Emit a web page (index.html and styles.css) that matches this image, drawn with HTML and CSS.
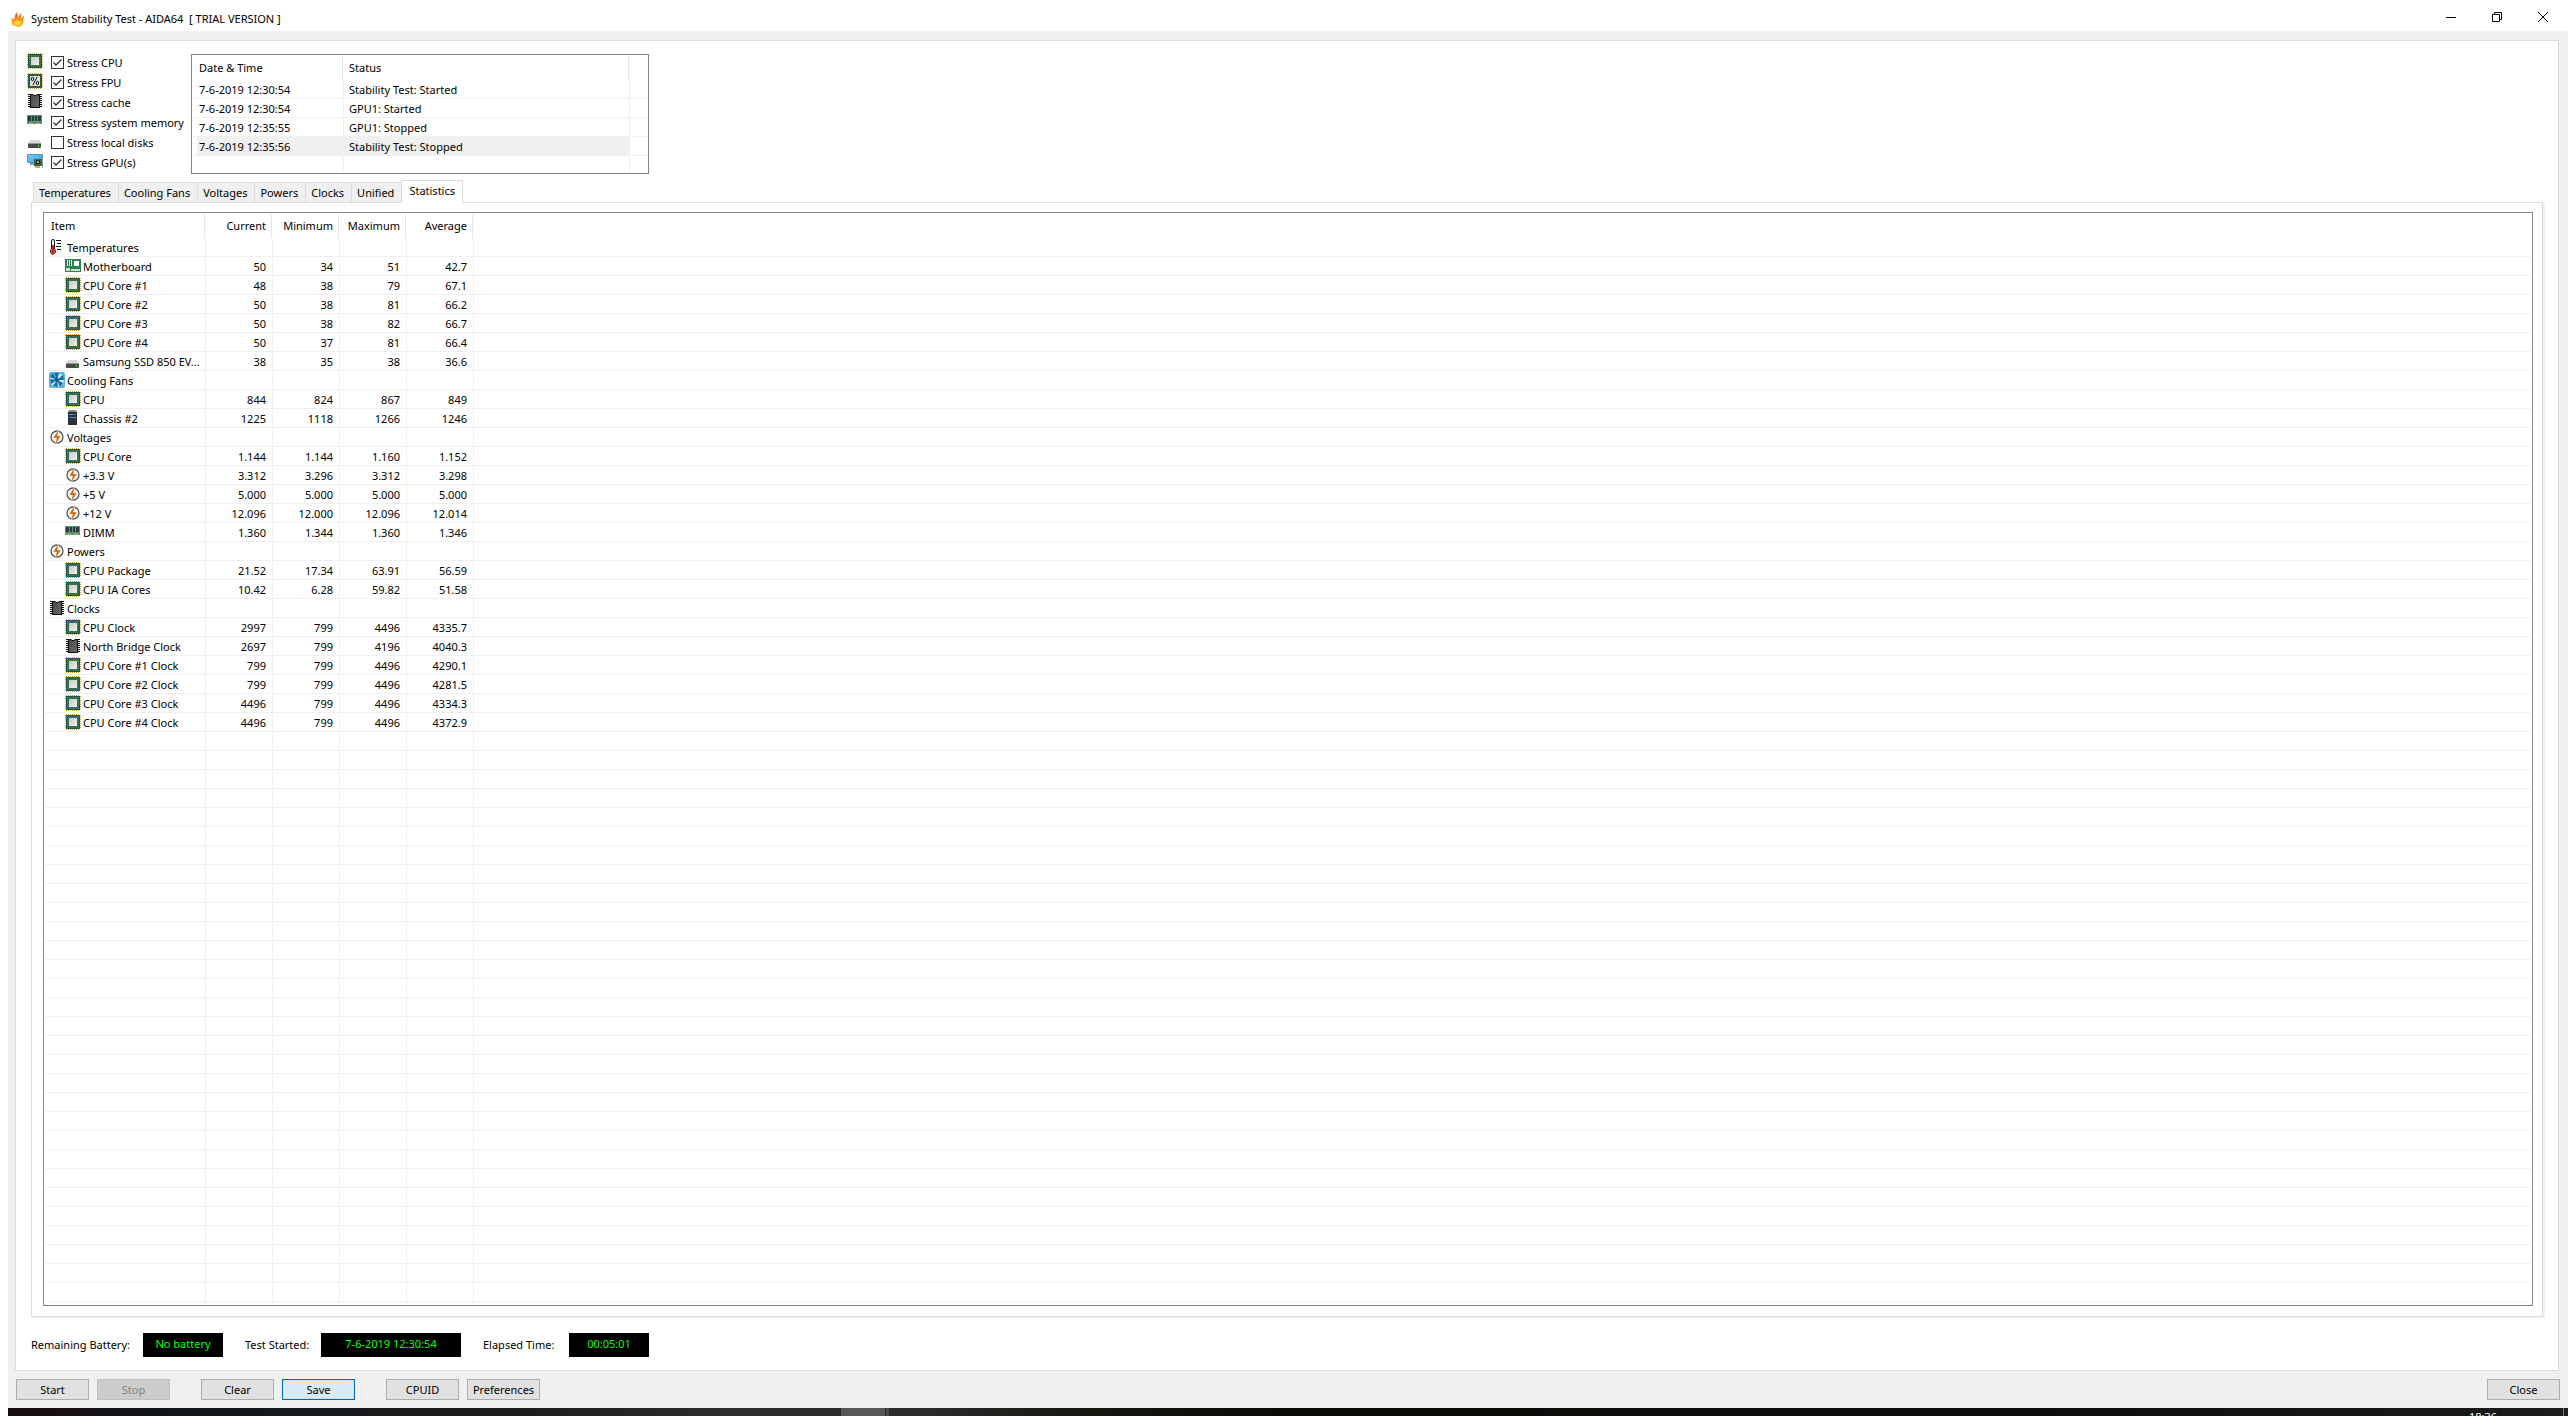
FILE: index.html
```html
<!DOCTYPE html>
<html lang="en">
<head>
<meta charset="utf-8">
<meta name="viewport" content="width=device-width, initial-scale=1">
<title>System Stability Test - AIDA64</title>
<link rel="stylesheet" href="styles.css">
</head>
<body>
<svg class="sprite" aria-hidden="true">
  <defs>
    <linearGradient id="die" x1="0" y1="0" x2="1" y2="1"><stop offset="0" stop-color="#c6c6c6"/><stop offset="1" stop-color="#f2f2f2"/></linearGradient>
    <linearGradient id="dark" x1="0" y1="0" x2="1" y2="1"><stop offset="0" stop-color="#4a4a4a"/><stop offset="1" stop-color="#6a6a6a"/></linearGradient>
    <linearGradient id="fire" x1="0" y1="0" x2="0" y2="1"><stop offset="0" stop-color="#f0641e"/><stop offset="1" stop-color="#fdb913"/></linearGradient>
    <linearGradient id="screen" x1="0" y1="0" x2="1" y2="1"><stop offset="0" stop-color="#7cc8f4"/><stop offset="1" stop-color="#3b9be0"/></linearGradient>
  </defs>
  <symbol id="cpu" viewBox="0 0 16 16">
    <path d="M1 .5h14M1 15.5h14M.5 1v14M15.5 1v14" stroke="#c9a24a" stroke-dasharray="1 1"/>
    <path fill="#35704f" d="M1 1h14v14H1z"/><path fill="none" stroke="#28573f" d="M1.500 1.500h13v13h-13z"/>
    <path fill="url(#die)" d="M4 4h8v8H4z"/>
  </symbol>
  <symbol id="fpu" viewBox="0 0 16 16">
    <path d="M1 .5h14M1 15.5h14M.5 1v14M15.5 1v14" stroke="#c9a24a" stroke-dasharray="1 1"/>
    <path fill="#2c5a45" d="M1 1h14v14H1z"/><path fill="#dedede" d="M3 3h10v10H3z"/>
    <ellipse cx="5.500" cy="6" rx="1.200" ry="1.700" fill="none" stroke="#111"/><ellipse cx="10.500" cy="10" rx="1.200" ry="1.700" fill="none" stroke="#111"/><path d="M10 4l-4 8" stroke="#111"/>
  </symbol>
  <symbol id="chip" viewBox="0 0 16 16">
    <path fill="#111" d="M3 1h3l1 1h2l1-1h3v14H3z"/><path fill="url(#dark)" d="M4 2h2l1 1h2l1-1h2v12H4z"/>
    <path d="M2 1v14M14 1v14" stroke="#111" stroke-width="2" stroke-dasharray="1 1"/>
    <path d="M2.500 2v13M13.500 2v13" stroke="#e8e8e8" stroke-dasharray="1 1"/>
  </symbol>
  <symbol id="ram" viewBox="0 0 16 16">
    <path fill="#4a9a74" d="M0 2h15v9H0z"/><path fill="#33383a" d="M1 3h3v5H1zM5 3h2v5H5zM8 3h2v5H8zM11 3h3v5h-3z"/>
    <path fill="#e0a070" d="M2 10h4v1H2zM9 10h4v1H9z"/>
  </symbol>
  <symbol id="disk" viewBox="0 0 16 16">
    <path fill="#d9d9d9" d="M3 7h9l2 3H1z"/><rect x="1" y="10" width="13" height="5" rx="1" fill="#484848"/><path fill="#999" d="M1 10h13v1H1z"/>
    <path fill="#4bea4b" d="M11 12h1v2h-1z"/>
  </symbol>
  <symbol id="gpu" viewBox="0 0 16 16">
    <path fill="url(#screen)" stroke="#4a9bd0" d="M.5 1.500h15v8H.5z"/><path fill="#8b98a2" d="M3 10h4v2H3z"/>
    <path fill="#2c6a4c" d="M7 6h8v7H7z"/><path fill="#222" d="M9 7h4v4H9z"/><path fill="#79b893" d="M10 8h2v2h-2z"/><path fill="#e8a53a" d="M8 13h5v2H8z"/><path fill="#999" d="M15 5h1v10h-1z"/>
  </symbol>
  <symbol id="thermo" viewBox="0 0 16 16">
    <path fill="#fff" stroke="#111" d="M2.500 10V2q0-1.500 1.500-1.500T5.500 2v8q1 1 1 2.500t-2.500 3q-2.500-.5-2.500-3T2.500 10z"/>
    <path fill="#e01818" d="M3 6h2v4l1 2.500q-.5 2-2 2.500-2-.5-2-2.500L3 10z"/><path stroke="#111" d="M7 1.500h5M8 4.500h4M7 7.500h5M8 10.500h4"/>
  </symbol>
  <symbol id="board" viewBox="0 0 16 16">
    <path fill="#28844a" d="M0 1h16v13H0z"/><path fill="#fff" d="M2 2h1v6H2zM4 2h1v6H4zM6 2h1v6H6zM9 3h5v5H9z"/><path fill="#d5dcd8" d="M1 10h4v3H1zM6 11h9v2H6z"/>
  </symbol>
  <symbol id="fan" viewBox="0 0 16 16">
    <rect width="16" height="16" rx="2" fill="#5cb2da"/><circle cx="8" cy="8" r="7" fill="#d0ebf6"/>
    <path fill="#0d6ea8" d="M8 8L5 1h5zM8 8l6-5 1 5zM8 8l6 3-3 4zM8 8l1 7-5-1zM8 8l-6 4-1-5zM8 8L1 5l3-4z"/><circle cx="8" cy="8" r="2" fill="#0a5f96"/>
  </symbol>
  <symbol id="tower" viewBox="0 0 16 16">
    <path fill="#888" d="M4 0h7l1 2H3z"/><path fill="#2f2f35" d="M3 2h9v13H3z"/><path stroke="#2f8de0" d="M4 4.500h7M4 7.500h7"/><path fill="#9fd4ff" d="M5 4h1v1H5zM9 7h1v1H9z"/>
  </symbol>
  <symbol id="bolt" viewBox="0 0 16 16">
    <circle cx="8" cy="8" r="6" fill="#fff" stroke="#555" stroke-width="1.300"/><path fill="#d9660f" stroke="#fff" stroke-width=".4" d="M10 0L4 9h3.500L6 16l6-9H8.500z"/>
  </symbol>
  <symbol id="flame" viewBox="0 0 16 16">
    <path fill="url(#fire)" d="M4 15C1 14 0 11 1 9L0 6l3 2c1-2 1-5 3-8 1 2 1 4 2 6 0-1 1-3 3-5 0 3 0 4-1 6l4-3-1 4c1 3-1 7-4 8z"/>
    <path fill="#ffd83a" d="M5 14c-2-1-2-3-1-5l2 1 1-3 1 3 3-1c0 3-1 4-3 5z"/>
  </symbol>
</svg>

<div class="window">
  <header class="titlebar">
    <svg class="app-icon"><use href="#flame"/></svg>
    <h1>System Stability Test - AIDA64&nbsp; [ TRIAL VERSION ]</h1>
    <button class="caption" aria-label="Minimize"><svg viewBox="0 0 10 10"><path d="M0 5.500h10"/></svg></button>
    <button class="caption" aria-label="Restore"><svg viewBox="0 0 10 10"><path d="M.5 2.500h7v7h-7zM2.500 2.500v-2h7v7h-2"/></svg></button>
    <button class="caption" aria-label="Close window"><svg viewBox="0 0 10 10"><path d="M0 0l10 10M10 0L0 10"/></svg></button>
  </header>

  <main class="client">
    <section class="panel">
      <div class="top">
        <div class="checks">
          <label><svg class="icon"><use href="#cpu"/></svg><input type="checkbox" checked>Stress CPU</label>
          <label><svg class="icon"><use href="#fpu"/></svg><input type="checkbox" checked>Stress FPU</label>
          <label><svg class="icon"><use href="#chip"/></svg><input type="checkbox" checked>Stress cache</label>
          <label><svg class="icon"><use href="#ram"/></svg><input type="checkbox" checked>Stress system memory</label>
          <label><svg class="icon"><use href="#disk"/></svg><input type="checkbox">Stress local disks</label>
          <label><svg class="icon"><use href="#gpu"/></svg><input type="checkbox" checked>Stress GPU(s)</label>
        </div>
        <div class="list log">
          <table>
            <colgroup><col class="c-date"><col class="c-status"><col></colgroup>
            <thead><tr><th>Date &amp; Time</th><th>Status</th><td></td></tr></thead>
            <tbody>
              <tr><td>7-6-2019 12:30:54</td><td>Stability Test: Started</td><td></td></tr>
              <tr><td>7-6-2019 12:30:54</td><td>GPU1: Started</td><td></td></tr>
              <tr><td>7-6-2019 12:35:55</td><td>GPU1: Stopped</td><td></td></tr>
              <tr class="selected"><td>7-6-2019 12:35:56</td><td>Stability Test: Stopped</td><td></td></tr>
            </tbody>
          </table>
          <div class="blank"></div>
        </div>
      </div>

      <div class="tabs" role="tablist">
        <button role="tab">Temperatures</button>
        <button role="tab">Cooling Fans</button>
        <button role="tab">Voltages</button>
        <button role="tab">Powers</button>
        <button role="tab">Clocks</button>
        <button role="tab">Unified</button>
        <button role="tab" aria-selected="true">Statistics</button>
      </div>

      <div class="page" role="tabpanel">
        <div class="list stats">
          <table>
            <colgroup><col class="c-item"><col class="c-num"><col class="c-num"><col class="c-num"><col class="c-num"><col></colgroup>
            <thead><tr><th>Item</th><th>Current</th><th>Minimum</th><th>Maximum</th><th>Average</th><td></td></tr></thead>
            <tbody>
              <tr class="group"><td><svg class="icon"><use href="#thermo"/></svg>Temperatures</td><td></td><td></td><td></td><td></td><td></td></tr>
              <tr><td><svg class="icon"><use href="#board"/></svg>Motherboard</td><td>50</td><td>34</td><td>51</td><td>42.7</td><td></td></tr>
              <tr><td><svg class="icon"><use href="#cpu"/></svg>CPU Core #1</td><td>48</td><td>38</td><td>79</td><td>67.1</td><td></td></tr>
              <tr><td><svg class="icon"><use href="#cpu"/></svg>CPU Core #2</td><td>50</td><td>38</td><td>81</td><td>66.2</td><td></td></tr>
              <tr><td><svg class="icon"><use href="#cpu"/></svg>CPU Core #3</td><td>50</td><td>38</td><td>82</td><td>66.7</td><td></td></tr>
              <tr><td><svg class="icon"><use href="#cpu"/></svg>CPU Core #4</td><td>50</td><td>37</td><td>81</td><td>66.4</td><td></td></tr>
              <tr><td><svg class="icon"><use href="#disk"/></svg>Samsung SSD 850 EV...</td><td>38</td><td>35</td><td>38</td><td>36.6</td><td></td></tr>
              <tr class="group"><td><svg class="icon"><use href="#fan"/></svg>Cooling Fans</td><td></td><td></td><td></td><td></td><td></td></tr>
              <tr><td><svg class="icon"><use href="#cpu"/></svg>CPU</td><td>844</td><td>824</td><td>867</td><td>849</td><td></td></tr>
              <tr><td><svg class="icon"><use href="#tower"/></svg>Chassis #2</td><td>1225</td><td>1118</td><td>1266</td><td>1246</td><td></td></tr>
              <tr class="group"><td><svg class="icon"><use href="#bolt"/></svg>Voltages</td><td></td><td></td><td></td><td></td><td></td></tr>
              <tr><td><svg class="icon"><use href="#cpu"/></svg>CPU Core</td><td>1.144</td><td>1.144</td><td>1.160</td><td>1.152</td><td></td></tr>
              <tr><td><svg class="icon"><use href="#bolt"/></svg>+3.3 V</td><td>3.312</td><td>3.296</td><td>3.312</td><td>3.298</td><td></td></tr>
              <tr><td><svg class="icon"><use href="#bolt"/></svg>+5 V</td><td>5.000</td><td>5.000</td><td>5.000</td><td>5.000</td><td></td></tr>
              <tr><td><svg class="icon"><use href="#bolt"/></svg>+12 V</td><td>12.096</td><td>12.000</td><td>12.096</td><td>12.014</td><td></td></tr>
              <tr><td><svg class="icon"><use href="#ram"/></svg>DIMM</td><td>1.360</td><td>1.344</td><td>1.360</td><td>1.346</td><td></td></tr>
              <tr class="group"><td><svg class="icon"><use href="#bolt"/></svg>Powers</td><td></td><td></td><td></td><td></td><td></td></tr>
              <tr><td><svg class="icon"><use href="#cpu"/></svg>CPU Package</td><td>21.52</td><td>17.34</td><td>63.91</td><td>56.59</td><td></td></tr>
              <tr><td><svg class="icon"><use href="#cpu"/></svg>CPU IA Cores</td><td>10.42</td><td>6.28</td><td>59.82</td><td>51.58</td><td></td></tr>
              <tr class="group"><td><svg class="icon"><use href="#chip"/></svg>Clocks</td><td></td><td></td><td></td><td></td><td></td></tr>
              <tr><td><svg class="icon"><use href="#cpu"/></svg>CPU Clock</td><td>2997</td><td>799</td><td>4496</td><td>4335.7</td><td></td></tr>
              <tr><td><svg class="icon"><use href="#chip"/></svg>North Bridge Clock</td><td>2697</td><td>799</td><td>4196</td><td>4040.3</td><td></td></tr>
              <tr><td><svg class="icon"><use href="#cpu"/></svg>CPU Core #1 Clock</td><td>799</td><td>799</td><td>4496</td><td>4290.1</td><td></td></tr>
              <tr><td><svg class="icon"><use href="#cpu"/></svg>CPU Core #2 Clock</td><td>799</td><td>799</td><td>4496</td><td>4281.5</td><td></td></tr>
              <tr><td><svg class="icon"><use href="#cpu"/></svg>CPU Core #3 Clock</td><td>4496</td><td>799</td><td>4496</td><td>4334.3</td><td></td></tr>
              <tr><td><svg class="icon"><use href="#cpu"/></svg>CPU Core #4 Clock</td><td>4496</td><td>799</td><td>4496</td><td>4372.9</td><td></td></tr>
            </tbody>
          </table>
          <div class="blank"></div>
        </div>
      </div>

      <div class="status">
        <label for="battery">Remaining Battery:</label><output id="battery">No battery</output>
        <label for="started">Test Started:</label><output id="started">7-6-2019 12:30:54</output>
        <label for="elapsed">Elapsed Time:</label><output id="elapsed">00:05:01</output>
      </div>
    </section>

    <footer class="actions">
      <div class="pair"><button class="btn">Start</button><button class="btn" disabled>Stop</button></div>
      <div class="pair"><button class="btn">Clear</button><button class="btn active">Save</button></div>
      <div class="pair"><button class="btn">CPUID</button><button class="btn">Preferences</button></div>
      <button class="btn close">Close</button>
    </footer>
  </main>

  <div class="taskbar"><span class="task"></span><span class="task-more"></span><time>18:36</time></div>
</div>
</body>
</html>
```
FILE: styles.css
```css
* { box-sizing: border-box; }

body {
  margin: 0;
  background: #fff;
  color: #000;
  font: 11px/18px "Noto Sans", sans-serif;
}

button {
  margin: 0;
  padding: 0;
  border: 0;
  background: none;
  color: inherit;
  font: inherit;
}

.sprite { position: absolute; width: 0; height: 0; }
.icon { flex: none; width: 16px; height: 16px; }

.window {
  display: flex;
  flex-direction: column;
  min-height: 100vh;
  padding: 0 8px;
}

/* Title bar */
.titlebar {
  display: flex;
  align-items: center;
  height: 31px;
  padding: 7px 2px 0 3px;
}
.titlebar h1 {
  flex: 1;
  margin: 0 0 0 5px;
  font-size: 11px;
  font-weight: 400;
  line-height: 24px;
}
.app-icon { width: 15px; height: 15px; }
.caption {
  display: flex;
  justify-content: center;
  align-items: flex-start;
  width: 46px;
  height: 14px;
}
.caption svg { width: 10px; height: 10px; fill: none; stroke: #000; }

/* Client area */
.client {
  flex: 1;
  display: flex;
  flex-direction: column;
  padding: 9px 0 8px;
  background: #f0f0f0;
}
.panel {
  flex: 1;
  display: flex;
  flex-direction: column;
  margin: 0 9px 0 7px;
  padding: 12px 15px 13px;
  border: 1px solid #dcdcdc;
  background: #fff;
}
.top { display: flex; align-items: flex-start; margin-left: -4px; }

.checks { flex: none; width: 164px; }
.checks label {
  display: flex;
  align-items: flex-start;
  height: 20px;
  line-height: 20px;
  white-space: nowrap;
}
.checks input {
  appearance: none;
  width: 13px;
  height: 13px;
  margin: 3px 3px 0 8px;
  border: 1px solid #333;
  background: #fff;
}
.checks input:checked {
  background: #fff url("data:image/svg+xml,%3Csvg xmlns='http://www.w3.org/2000/svg' viewBox='0 0 11 11'%3E%3Cpath d='M1.500 5.500l2.500 2.500 5.500-5.500' fill='none' stroke='%23333' stroke-width='1.300'/%3E%3C/svg%3E");
}

/* List views */
.list {
  display: flex;
  flex-direction: column;
  padding: 1px;
  border: 1px solid #828790;
  background: #fff;
}
table {
  width: 100%;
  table-layout: fixed;
  border-spacing: 0;
}
th, td {
  padding: 0 6px 0 5px;
  white-space: nowrap;
  overflow: hidden;
}
thead th, thead td { height: 24px; padding-right: 7px; }
th {
  background: linear-gradient(#e5e5e5, #e5e5e5) no-repeat right 1px top / 1px 100%;
  font-weight: 400;
  text-align: left;
}
tbody td {
  height: 19px;
  padding-top: 2px;
  line-height: 16px;
  border: solid #f0f0f0;
  border-width: 0 1px 1px 0;
}
tbody td:last-child { border-right: 0; }
th:first-child { padding-left: 6px; }
.blank { flex: 1; }

.log { width: 458px; max-width: 100%; height: 120px; margin-top: 1px; }
.log td:first-child { padding-left: 6px; }
.c-date { width: 151px; }
.c-status { width: 286px; }
.selected td:first-child { background: linear-gradient(90deg, #fff 4px, #f0f0f0 4px); }
.selected td:nth-child(2) { background: #f0f0f0; }
.log .blank {
  background:
    linear-gradient(#f0f0f0, #f0f0f0) no-repeat 150px 0 / 1px 100%,
    linear-gradient(#f0f0f0, #f0f0f0) no-repeat 436px 0 / 1px 100%;
}

/* Tabs */
.tabs {
  display: flex;
  align-items: flex-end;
  height: 23px;
  margin: 6px 0 -1px 2px;
}
.tabs button {
  height: 21px;
  padding: 0 7px 0 5px;
  border: solid #dcdcdc;
  border-width: 1px 0 1px 1px;
  background: #f0f0f0;
  line-height: 20px;
}
.tabs [aria-selected] {
  z-index: 1;
  height: 23px;
  padding: 0 7px 2px;
  border-width: 1px 1px 0;
  background: #fff;
}

.page {
  flex: 1;
  display: flex;
  flex-direction: column;
  padding: 9px 9px 10px 11px;
  border: 1px solid #dcdcdc;
  box-shadow: 1px 1px #f0f0f0, 2px 1px #f0f0f0;
}
.stats { flex: 1; }
.stats tr > :nth-child(n+2) { text-align: right; }
.stats tbody td:first-child { padding: 1px 0 0 20px; line-height: 18px; }
.stats tbody .group td:first-child { padding-left: 4px; }
.stats tbody td:first-child { height: 19px; line-height: 17px; }
.stats .icon { display: inline-block; margin-right: 2px; vertical-align: top; }
.c-item { width: 161px; }
.c-num { width: 67px; }
.stats .blank {
  --line: linear-gradient(#f0f0f0, #f0f0f0) no-repeat;
  background:
    var(--line) 160px 0 / 1px 100%,
    var(--line) 227px 0 / 1px 100%,
    var(--line) 294px 0 / 1px 100%,
    var(--line) 361px 0 / 1px 100%,
    var(--line) 428px 0 / 1px 100%,
    repeating-linear-gradient(#fff 0 18px, #f0f0f0 18px 19px);
}

/* Status read-outs */
.status {
  display: grid;
  grid-template-columns: 112px 80px 98px 140px 108px 80px;
  padding-top: 16px;
  line-height: 24px;
}
.status label:nth-of-type(n+2) { padding-left: 22px; }
.status output { background: #000; color: #0f0; text-align: center; line-height: 22px; }

/* Buttons */
.actions {
  display: flex;
  gap: 31px;
  padding: 8px 8px 0;
}
.pair { display: flex; gap: 8px; }
.btn {
  width: 73px;
  height: 21px;
  border: 1px solid #adadad;
  background: #e1e1e1;
  line-height: 19px;
  white-space: nowrap;
}
.btn:disabled { border-color: #bfbfbf; background: #ccc; color: #838383; }
.btn.active { border-color: #0069b8; background: #daebf8; box-shadow: inset 0 0 0 1px #cbe3f5; }
.close { margin-left: auto; }

/* Sliver of the desktop taskbar */
.taskbar {
  display: flex;
  height: 8px;
  overflow: hidden;
  background: linear-gradient(90deg, #1a0c10, #10151a 6%, #1c1c1c 20%, #2b2d2d 28%, #2a2a2a 36%, #14180f 42%, #080b06 50%, #0c0d0c 80%, #1c1c1c);
  color: #fff;
}
.task { width: 44px; margin-left: 833px; background: #565858; }
.task-more { width: 3px; margin-left: 1px; background: #4a4a4a; }
.taskbar time { margin-left: auto; padding-right: 66px; border-right: 1px solid #777; margin-right: 4px; }
```
